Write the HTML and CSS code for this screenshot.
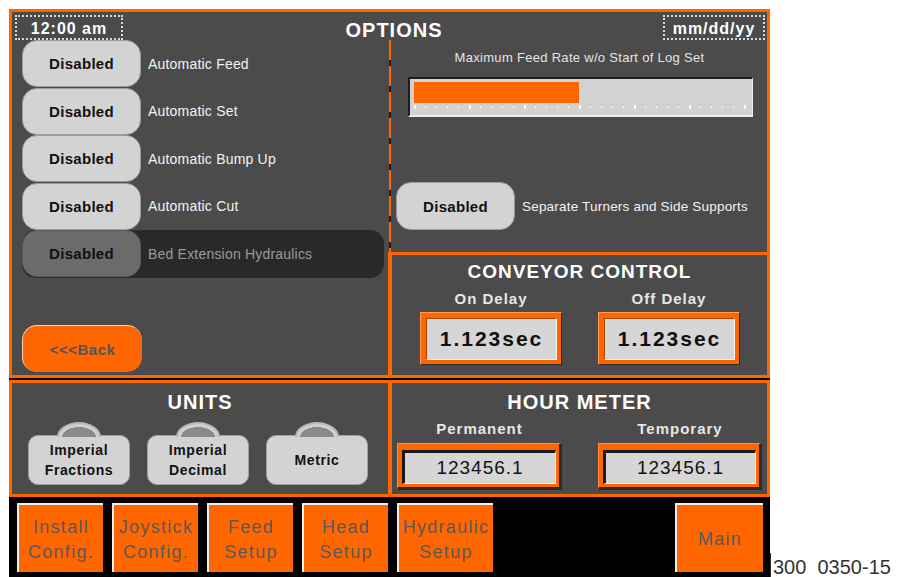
FILE: index.html
```html
<!DOCTYPE html>
<html lang="en">
<head>
    <meta charset="UTF-8">
    <meta name="viewport" content="width=device-width, initial-scale=1.0">
    <title>Options</title>
    <link rel="stylesheet" href="styles.css">
</head>
<body>
<div class="page">
    <div class="screen">
        <div class="top-frame">
            <div class="header">
                <div class="stamp">12:00 am</div>
                <h1 class="title">OPTIONS</h1>
                <div class="stamp stamp-date">mm/dd/yy</div>
            </div>

            <div class="opt-list">
                <div class="opt-row"><button class="toggle">Disabled</button><span class="opt-label">Automatic Feed</span></div>
                <div class="opt-row"><button class="toggle">Disabled</button><span class="opt-label">Automatic Set</span></div>
                <div class="opt-row"><button class="toggle">Disabled</button><span class="opt-label">Automatic Bump Up</span></div>
                <div class="opt-row"><button class="toggle">Disabled</button><span class="opt-label">Automatic Cut</span></div>
                <div class="opt-row opt-row-off"><button class="toggle">Disabled</button><span class="opt-label">Bed Extension Hydraulics</span></div>
                <button class="back">&lt;&lt;&lt;Back</button>
            </div>

            <div class="v-divider"><div class="dash"></div><div class="solid"></div></div>

            <div class="right-col">
                <div class="feed">
                    <p class="feed-label">Maximum Feed Rate w/o Start of Log Set</p>
                    <div class="slider">
                        <div class="slider-fill" style="width: 165px"></div>
                        <div class="ticks"></div>
                    </div>
                    <div class="opt-row feed-row"><button class="toggle toggle-tall">Disabled</button><span class="opt-label opt-label-sm">Separate Turners and Side Supports</span></div>
                </div>
                <div class="conveyor">
                    <h2 class="panel-title panel-title-sm">CONVEYOR CONTROL</h2>
                    <div class="conv-pair">
                        <div class="field">
                            <span class="field-label">On Delay</span>
                            <div class="delay-box"><div class="delay-value">1.123sec</div></div>
                        </div>
                        <div class="field">
                            <span class="field-label">Off Delay</span>
                            <div class="delay-box"><div class="delay-value">1.123sec</div></div>
                        </div>
                    </div>
                </div>
            </div>
        </div>

        <div class="mid-frame">
            <div class="units">
                <h2 class="panel-title">UNITS</h2>
                <div class="unit-row">
                    <button class="unit-btn">Imperial<br>Fractions</button>
                    <button class="unit-btn">Imperial<br>Decimal</button>
                    <button class="unit-btn">Metric</button>
                </div>
            </div>
            <div class="v-divider"><div class="solid"></div></div>
            <div class="hours">
                <h2 class="panel-title">HOUR METER</h2>
                <div class="hour-pair">
                    <div class="field">
                        <span class="field-label">Permanent</span>
                        <div class="hour-box"><div class="hour-value">123456.1</div></div>
                    </div>
                    <div class="field">
                        <span class="field-label">Temporary</span>
                        <div class="hour-box"><div class="hour-value">123456.1</div></div>
                    </div>
                </div>
            </div>
        </div>

        <nav class="nav-bar">
            <button class="nav-btn">Install<br>Config.</button>
            <button class="nav-btn">Joystick<br>Config.</button>
            <button class="nav-btn">Feed<br>Setup</button>
            <button class="nav-btn">Head<br>Setup</button>
            <button class="nav-btn nav-wide">Hydraulic<br>Setup</button>
            <button class="nav-btn nav-main">Main</button>
        </nav>
    </div>
    <div class="caption">300  0350-15</div>
</div>
</body>
</html>
```

FILE: styles.css
```css
body {
    margin: 0;
    background-color: #fff;
    font-family: "Liberation Sans", Arial, sans-serif;
}
button {
    font-family: inherit;
    padding: 0;
    cursor: pointer;
}
.page {
    display: flex;
    align-items: flex-end;
    height: 577px;
    padding: 9px 0 0 9px;
    box-sizing: border-box;
}
.screen {
    width: 761px;
    background-color: #000;
    display: flex;
    flex-direction: column;
}

/* top frame: options + feed + conveyor */
.top-frame {
    height: 369px;
    box-sizing: border-box;
    border: 3px solid #ff6600;
    background-color: #4b4b4b;
    display: grid;
    grid-template-columns: 376px 4px 375px;
    grid-template-rows: 28px 335px;
}
.header {
    grid-column: 1 / -1;
    display: grid;
    grid-template-columns: 1fr auto 1fr;
    align-items: start;
    padding: 3px 2px 0 3px;
}
.stamp {
    width: 108px;
    height: 25px;
    box-sizing: border-box;
    border: 2px dotted #d8d8d8;
    padding-top: 2px;
    color: #fff;
    font-size: 16px;
    font-weight: bold;
    line-height: 19px;
    letter-spacing: 1px;
    text-align: center;
}
.stamp-date {
    width: 102px;
    justify-self: end;
}
.title {
    margin: 0;
    padding: 3px 0 0 8px;
    color: #fff;
    font-size: 20px;
    line-height: 24px;
    letter-spacing: 1px;
}

.opt-list {
    padding-left: 10px;
    display: flex;
    flex-direction: column;
    align-items: flex-start;
}
.opt-row {
    display: flex;
    align-items: center;
    height: 47.5px;
}
.opt-row-off {
    width: 362px;
    background-color: #292929;
    border-radius: 14px;
}
.toggle {
    width: 119px;
    height: 47px;
    background-color: #d3d3d3;
    border: 1px solid #9c9c9c;
    border-radius: 15px;
    color: #111;
    font-size: 15px;
    font-weight: bold;
    letter-spacing: 0.3px;
}
.toggle-tall {
    height: 48px;
}
.opt-row-off .toggle {
    background-color: #6b6b6b;
    border-color: #5a5a5a;
}
.opt-label {
    margin-left: 7px;
    color: #f2f2f2;
    font-size: 14px;
    letter-spacing: 0.2px;
}
.opt-label-sm {
    font-size: 13.5px;
}
.opt-row-off .opt-label {
    color: #9a9a9a;
}
.back {
    margin-top: 47.5px;
    width: 120px;
    height: 47px;
    background-color: #ff6600;
    border: none;
    border-top: 1px solid #f4d0b8;
    border-left: 1px solid #f4d0b8;
    border-radius: 15px;
    color: #555;
    font-size: 15px;
    font-weight: bold;
    letter-spacing: 0.5px;
}

.v-divider {
    display: flex;
    flex-direction: column;
}
.v-divider .dash {
    height: 212px;
    margin: 0 1px 0 1px;
    background: repeating-linear-gradient(180deg, #ff6600 0 20px, #1c1c1c 20px 26px);
}
.v-divider .solid {
    flex: 1;
    background-color: #ff6600;
}

.right-col {
    display: flex;
    flex-direction: column;
}
.feed {
    height: 212px;
    box-sizing: border-box;
    padding-top: 10px;
}
.feed-label {
    margin: 0;
    color: #e4e4e4;
    font-size: 13px;
    line-height: 16px;
    letter-spacing: 0.3px;
    text-align: center;
}
.slider {
    margin: 11px 0 0 16px;
    width: 345px;
    height: 40px;
    box-sizing: border-box;
    padding: 3px 6px 0 4px;
    background-color: #d2d2d2;
    border-top: 2px solid #1e1e1e;
    border-left: 2px solid #1e1e1e;
    border-right: 1px solid #eee;
    border-bottom: 2px solid #eee;
}
.slider-fill {
    height: 21px;
    background-color: #ff6600;
}
.ticks {
    margin-top: 2px;
    height: 4px;
    background:
        repeating-linear-gradient(90deg, #fafafa 0 2px, transparent 2px 55px),
        repeating-linear-gradient(90deg, #fafafa 0 1px, transparent 1px 11px) 0 1px / 100% 2px no-repeat;
}
.feed-row {
    margin-top: 65px;
    padding-left: 4px;
    height: 48px;
}

.conveyor {
    height: 123px;
    box-sizing: border-box;
    border-top: 3px solid #ff6600;
    padding-top: 6px;
}
.panel-title {
    margin: 0;
    color: #fff;
    font-size: 20px;
    font-weight: bold;
    line-height: 22px;
    letter-spacing: 1px;
    text-align: center;
}
.panel-title-sm {
    font-size: 19px;
}
.conv-pair {
    display: grid;
    grid-template-columns: 178px 178px;
    padding-left: 10px;
    margin-top: 7px;
}
.field {
    display: flex;
    flex-direction: column;
    align-items: center;
}
.field-label {
    color: #e6e6e6;
    font-size: 15px;
    font-weight: bold;
    line-height: 18px;
    letter-spacing: 1px;
}
.delay-box {
    margin-top: 4px;
    width: 142px;
    height: 53px;
    box-sizing: border-box;
    padding: 5px 4px 4px 5px;
    background-color: #ff6600;
    border: 1px solid #ff9a5c;
    border-right-color: #2c2c2c;
    border-bottom-color: #2c2c2c;
}
.delay-value {
    height: 100%;
    box-sizing: border-box;
    background-color: #d6d6d6;
    border-top: 1px solid #a84300;
    border-left: 1px solid #a84300;
    border-right: 1px solid #f4f4f4;
    border-bottom: 1px solid #f4f4f4;
    color: #111;
    font-size: 21px;
    font-weight: bold;
    line-height: 40px;
    letter-spacing: 2px;
    text-align: center;
}

/* middle frame: units + hour meter */
.mid-frame {
    margin-top: 2px;
    height: 117px;
    box-sizing: border-box;
    border: 3px solid #ff6600;
    background-color: #4b4b4b;
    display: grid;
    grid-template-columns: 376px 4px 375px;
}
.units, .hours {
    padding-top: 8px;
}
.unit-row {
    display: flex;
    gap: 17px;
    padding-left: 16px;
    margin-top: 22px;
}
.unit-btn {
    position: relative;
    width: 102px;
    height: 50px;
    background-color: #d3d3d3;
    border: 1px solid #a0a0a0;
    border-radius: 10px;
    color: #111;
    font-size: 14px;
    font-weight: bold;
    line-height: 20px;
    letter-spacing: 0.6px;
}
.unit-btn::before {
    content: "";
    position: absolute;
    top: -14px;
    left: 50%;
    margin-left: -22px;
    width: 40px;
    height: 13px;
    background: radial-gradient(ellipse 17px 10px at 50% 100%, #8a8a8a 0 98%, #d0d0d0 100%);
    border: 2px solid #b8b8b8;
    border-bottom: 0;
    border-radius: 22px 22px 0 0 / 15px 15px 0 0;
}
.hour-pair {
    display: grid;
    grid-template-columns: 165px 164px;
    column-gap: 36px;
    padding-left: 5px;
    margin-top: 7px;
}
.hour-box {
    margin-top: 5px;
    width: 100%;
    height: 47px;
    box-sizing: border-box;
    padding: 6px 3px 3px 4px;
    background-color: #ff6600;
    border-style: solid;
    border-width: 1px 3px 3px 1px;
    border-color: #ff8c44 #2b2b2b #2b2b2b #ff8c44;
}
.hour-value {
    height: 100%;
    box-sizing: border-box;
    background-color: #d6d6d6;
    border-style: solid;
    border-width: 3px 1px 1px 3px;
    border-color: #1a1a1a #eee #eee #1a1a1a;
    color: #111;
    font-size: 19px;
    line-height: 30px;
    letter-spacing: 1px;
    text-align: center;
}

/* bottom navigation */
.nav-bar {
    height: 80px;
    box-sizing: border-box;
    padding: 6px 7px 0 8px;
    display: flex;
    align-items: flex-start;
    gap: 9px;
}
.nav-btn {
    width: 86px;
    height: 69px;
    padding-top: 2px;
    background-color: #ff6600;
    border: none;
    border-top: 2px solid #efefef;
    border-left: 2px solid #efefef;
    color: #5a5a5a;
    font-size: 18px;
    line-height: 25px;
    letter-spacing: 1.3px;
}
.nav-wide {
    width: 96px;
}
.nav-main {
    margin-left: auto;
    width: 88px;
}

.caption {
    height: 24px;
    box-sizing: border-box;
    padding: 4px 0 0 2px;
    border-left: 1px solid #333;
    color: #333;
    font-size: 20px;
    line-height: 20px;
    white-space: pre;
}
```
